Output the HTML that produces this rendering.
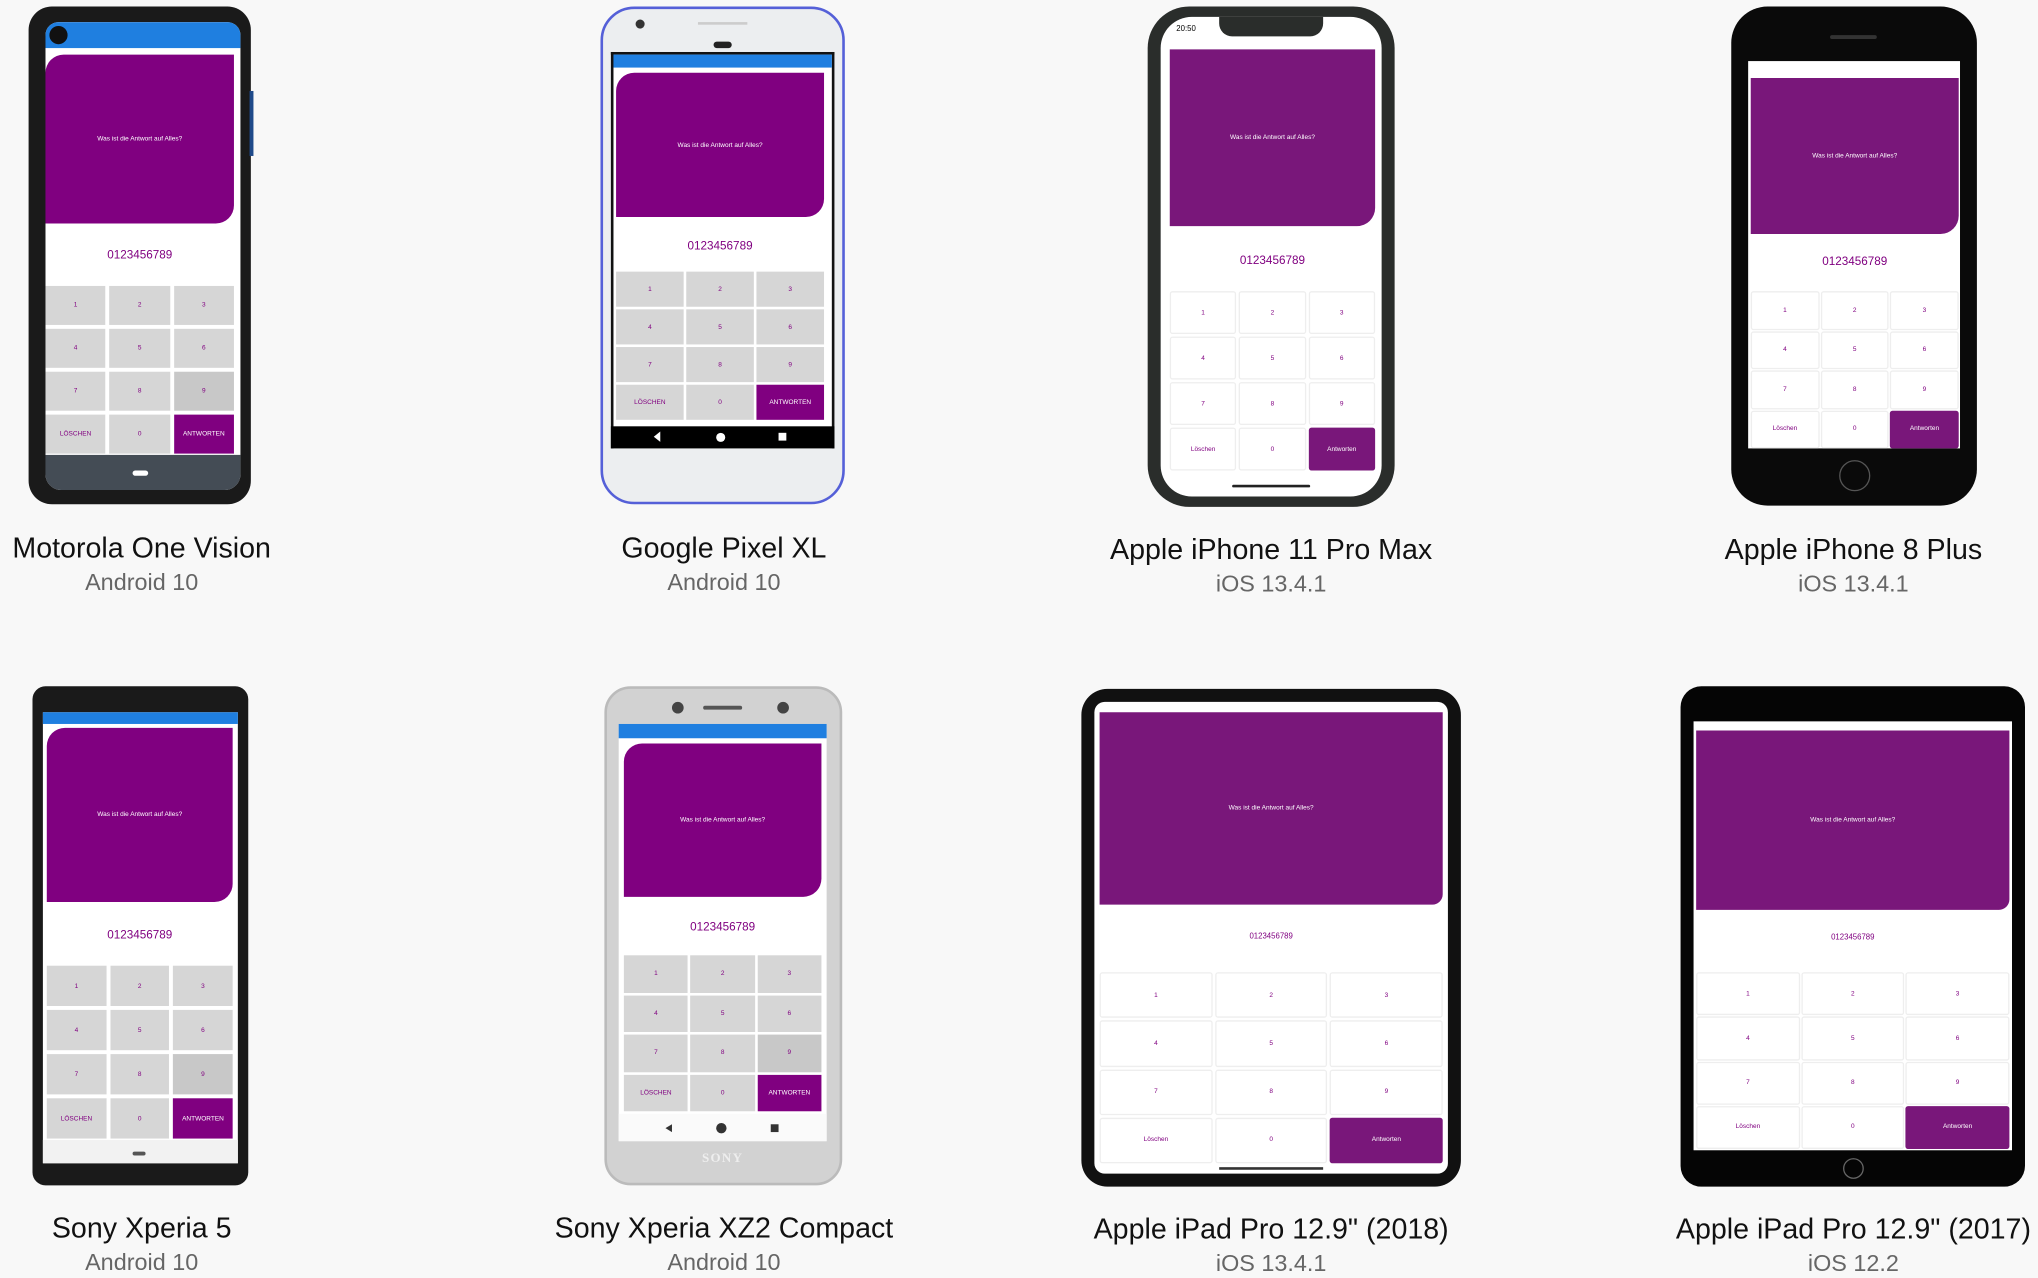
<!DOCTYPE html>
<html><head><meta charset="utf-8"><style>
html,body{margin:0;padding:0;background:#f8f8f8;width:2038px;height:1278px;overflow:hidden;font-family:"Liberation Sans",sans-serif}
#w{position:absolute;left:0;top:0;width:1568px;height:983px;transform:scale(1.29974);transform-origin:0 0}
.a{position:absolute;box-sizing:border-box}
.card{position:absolute;background:#800080;color:#fff;font-size:5px;display:flex;align-items:center;justify-content:center;border-radius:14px 0 14px 0}
.ios{background:#79177a;border-radius:0 0 14px 0}
.num{position:absolute;color:#800080;font-size:9px;text-align:center}
.kp{position:absolute;display:grid;grid-template-columns:1fr 1fr 1fr}
.kp div{background:#d6d6d6;color:#800080;font-size:5px;display:flex;align-items:center;justify-content:center}
.kp div.g{background:#800080;color:#fff}
.kw div{background:#fff;border:1px solid #eee;border-radius:2px}
.kw div.g{background:#79177a;border:none}
.sb{position:absolute;background:#1f7fe0}
.t{position:absolute;text-align:center;width:360px;font-size:22px;color:#111}
.s{position:absolute;text-align:center;width:360px;font-size:18px;color:#666}
</style></head><body><div id="w">

<!-- 1 Motorola -->
<div class="a" style="left:22px;top:5px;width:171px;height:383px;background:#1a1a1a;border-radius:18px"></div>
<div class="a" style="left:192px;top:70px;width:3px;height:50px;background:#1f4a8a"></div>
<div class="a" style="left:35px;top:17px;width:150px;height:360px;background:#fff;border-radius:10px 10px 12px 12px;overflow:hidden">
 <div class="sb" style="left:0;top:0;width:150px;height:20px"></div>
 <div class="a" style="left:3px;top:3px;width:14px;height:14px;border-radius:50%;background:#111"></div>
 <div class="a" style="left:0;top:333px;width:150px;height:28px;background:#444c55"></div>
 <div class="a" style="left:67px;top:345px;width:12px;height:4px;border-radius:2px;background:#fff"></div>
</div>
<div class="card" style="left:35px;top:42px;width:145px;height:130px">Was ist die Antwort auf Alles?</div>
<div class="num" style="left:35px;top:191px;width:145px">0123456789</div>
<div class="kp" style="left:35px;top:220px;width:145px;height:129px;gap:3px">
<div>1</div><div>2</div><div>3</div><div>4</div><div>5</div><div>6</div><div>7</div><div>8</div><div style="background:#c8c8c8">9</div><div>LÖSCHEN</div><div>0</div><div class="g">ANTWORTEN</div></div>
<div class="t" style="left:-71px;top:409px">Motorola One Vision</div>
<div class="s" style="left:-71px;top:438px">Android 10</div>

<!-- 2 Pixel XL -->
<div class="a" style="left:462px;top:5px;width:188px;height:383px;background:#eceef0;border:2px solid #5560d8;border-radius:26px"></div>
<div class="a" style="left:489px;top:15px;width:7px;height:7px;border-radius:50%;background:#333"></div>
<div class="a" style="left:537px;top:17px;width:38px;height:2px;background:#ccc"></div>
<div class="a" style="left:549px;top:32px;width:14px;height:5px;border-radius:3px;background:#222"></div>
<div class="a" style="left:470px;top:40px;width:172px;height:305px;background:#fff;border:2px solid #111;border-bottom:none"></div>
<div class="sb" style="left:472px;top:42px;width:168px;height:10px"></div>
<div class="a" style="left:470px;top:328px;width:172px;height:17px;background:#000"></div>
<div class="a" style="left:503px;top:332px;width:0;height:0;border:4px solid transparent;border-right:5px solid #fff;border-left:none"></div>
<div class="a" style="left:551px;top:333px;width:7px;height:7px;border-radius:50%;background:#fff"></div>
<div class="a" style="left:599px;top:333px;width:6px;height:6px;background:#fff"></div>
<div class="card" style="left:474px;top:56px;width:160px;height:111px">Was ist die Antwort auf Alles?</div>
<div class="num" style="left:474px;top:184px;width:160px">0123456789</div>
<div class="kp" style="left:474px;top:209px;width:160px;height:114px;gap:2px">
<div>1</div><div>2</div><div>3</div><div>4</div><div>5</div><div>6</div><div>7</div><div>8</div><div>9</div><div>LÖSCHEN</div><div>0</div><div class="g">ANTWORTEN</div></div>
<div class="t" style="left:377px;top:409px">Google Pixel XL</div>
<div class="s" style="left:377px;top:438px">Android 10</div>

<!-- 3 iPhone 11 Pro Max -->
<div class="a" style="left:883px;top:5px;width:190px;height:385px;background:#2a2d2b;border-radius:32px"></div>
<div class="a" style="left:893px;top:13px;width:170px;height:369px;background:#fff;border-radius:24px"></div>
<div class="a" style="left:938px;top:13px;width:80px;height:15px;background:#2a2d2b;border-radius:0 0 10px 10px"></div>
<div class="a" style="left:905px;top:20px;font-size:6px;color:#000">20:50</div>
<div class="card ios" style="left:900px;top:38px;width:158px;height:136px">Was ist die Antwort auf Alles?</div>
<div class="num" style="left:900px;top:195px;width:158px">0123456789</div>
<div class="kp kw" style="left:900px;top:224px;width:158px;height:138px;gap:2px">
<div>1</div><div>2</div><div>3</div><div>4</div><div>5</div><div>6</div><div>7</div><div>8</div><div>9</div><div>Löschen</div><div>0</div><div class="g">Antworten</div></div>
<div class="a" style="left:948px;top:373px;width:60px;height:2px;background:#222;border-radius:1px"></div>
<div class="t" style="left:798px;top:410px">Apple iPhone 11 Pro Max</div>
<div class="s" style="left:798px;top:439px">iOS 13.4.1</div>

<!-- 4 iPhone 8 Plus -->
<div class="a" style="left:1332px;top:5px;width:189px;height:384px;background:#0a0a0a;border-radius:28px"></div>
<div class="a" style="left:1345px;top:47px;width:163px;height:298px;background:#fff"></div>
<div class="a" style="left:1408px;top:27px;width:36px;height:3px;background:#333;border-radius:2px"></div>
<div class="a" style="left:1415px;top:354px;width:24px;height:24px;border:1.5px solid #555;border-radius:50%"></div>
<div class="card ios" style="left:1347px;top:60px;width:160px;height:120px">Was ist die Antwort auf Alles?</div>
<div class="num" style="left:1347px;top:196px;width:160px">0123456789</div>
<div class="kp kw" style="left:1347px;top:224px;width:160px;height:121px;gap:1px">
<div>1</div><div>2</div><div>3</div><div>4</div><div>5</div><div>6</div><div>7</div><div>8</div><div>9</div><div>Löschen</div><div>0</div><div class="g">Antworten</div></div>
<div class="t" style="left:1246px;top:410px">Apple iPhone 8 Plus</div>
<div class="s" style="left:1246px;top:439px">iOS 13.4.1</div>

<!-- 5 Sony Xperia 5 -->
<div class="a" style="left:25px;top:528px;width:166px;height:384px;background:#1a1a1a;border-radius:10px"></div>
<div class="a" style="left:33px;top:548px;width:150px;height:347px;background:#fff"></div>
<div class="sb" style="left:33px;top:548px;width:150px;height:9px"></div>
<div class="a" style="left:33px;top:877px;width:150px;height:18px;background:#f2f2f2"></div>
<div class="a" style="left:102px;top:886px;width:10px;height:3px;background:#555;border-radius:2px"></div>
<div class="card" style="left:36px;top:560px;width:143px;height:134px">Was ist die Antwort auf Alles?</div>
<div class="num" style="left:36px;top:714px;width:143px">0123456789</div>
<div class="kp" style="left:36px;top:743px;width:143px;height:133px;gap:3px">
<div>1</div><div>2</div><div>3</div><div>4</div><div>5</div><div>6</div><div>7</div><div>8</div><div style="background:#c8c8c8">9</div><div>LÖSCHEN</div><div>0</div><div class="g">ANTWORTEN</div></div>
<div class="t" style="left:-71px;top:932px">Sony Xperia 5</div>
<div class="s" style="left:-71px;top:961px">Android 10</div>

<!-- 6 XZ2 Compact -->
<div class="a" style="left:465px;top:528px;width:183px;height:384px;background:#d2d2d2;border:2px solid #bbb;border-radius:20px"></div>
<div class="a" style="left:517px;top:540px;width:9px;height:9px;border-radius:50%;background:#444"></div>
<div class="a" style="left:598px;top:540px;width:9px;height:9px;border-radius:50%;background:#444"></div>
<div class="a" style="left:541px;top:543px;width:30px;height:3px;background:#555;border-radius:2px"></div>
<div class="a" style="left:476px;top:557px;width:160px;height:321px;background:#fff"></div>
<div class="sb" style="left:476px;top:557px;width:160px;height:11px"></div>
<div class="a" style="left:476px;top:857px;width:160px;height:21px;background:#fafafa"></div>
<div class="a" style="left:551px;top:864px;width:8px;height:8px;border-radius:50%;background:#333"></div>
<div class="a" style="left:593px;top:865px;width:6px;height:6px;background:#333"></div>
<div class="a" style="left:512px;top:865px;width:0;height:0;border:3px solid transparent;border-right:5px solid #333;border-left:none"></div>
<div class="a" style="left:476px;top:886px;width:160px;text-align:center;font-family:'Liberation Serif',serif;font-size:10px;color:#eee;font-weight:bold;letter-spacing:1px">SONY</div>
<div class="card" style="left:480px;top:572px;width:152px;height:118px">Was ist die Antwort auf Alles?</div>
<div class="num" style="left:480px;top:708px;width:152px">0123456789</div>
<div class="kp" style="left:480px;top:735px;width:152px;height:120px;gap:2px">
<div>1</div><div>2</div><div>3</div><div>4</div><div>5</div><div>6</div><div>7</div><div>8</div><div style="background:#c8c8c8">9</div><div>LÖSCHEN</div><div>0</div><div class="g">ANTWORTEN</div></div>
<div class="t" style="left:377px;top:932px">Sony Xperia XZ2 Compact</div>
<div class="s" style="left:377px;top:961px">Android 10</div>

<!-- 7 iPad 2018 -->
<div class="a" style="left:832px;top:530px;width:292px;height:383px;background:#111;border-radius:20px"></div>
<div class="a" style="left:842px;top:540px;width:272px;height:363px;background:#fff;border-radius:8px"></div>
<div class="card ios" style="left:846px;top:548px;width:264px;height:148px;border-radius:0 0 8px 0">Was ist die Antwort auf Alles?</div>
<div class="num" style="left:846px;top:718px;width:264px;font-size:6px">0123456789</div>
<div class="kp kw" style="left:846px;top:748px;width:264px;height:147px;gap:2px">
<div>1</div><div>2</div><div>3</div><div>4</div><div>5</div><div>6</div><div>7</div><div>8</div><div>9</div><div>Löschen</div><div>0</div><div class="g">Antworten</div></div>
<div class="a" style="left:938px;top:898px;width:80px;height:2px;background:#333"></div>
<div class="t" style="left:798px;top:933px">Apple iPad Pro 12.9" (2018)</div>
<div class="s" style="left:798px;top:962px">iOS 13.4.1</div>

<!-- 8 iPad 2017 -->
<div class="a" style="left:1293px;top:528px;width:265px;height:385px;background:#050505;border-radius:16px"></div>
<div class="a" style="left:1303px;top:555px;width:245px;height:330px;background:#fff"></div>
<div class="a" style="left:1418px;top:891px;width:16px;height:16px;border:1px solid #666;border-radius:50%"></div>
<div class="card ios" style="left:1305px;top:562px;width:241px;height:138px;border-radius:0 0 8px 0">Was ist die Antwort auf Alles?</div>
<div class="num" style="left:1305px;top:719px;width:241px;font-size:6px">0123456789</div>
<div class="kp kw" style="left:1305px;top:748px;width:241px;height:136px;gap:1px">
<div>1</div><div>2</div><div>3</div><div>4</div><div>5</div><div>6</div><div>7</div><div>8</div><div>9</div><div>Löschen</div><div>0</div><div class="g">Antworten</div></div>
<div class="t" style="left:1246px;top:933px">Apple iPad Pro 12.9" (2017)</div>
<div class="s" style="left:1246px;top:962px">iOS 12.2</div>

</div></body></html>
